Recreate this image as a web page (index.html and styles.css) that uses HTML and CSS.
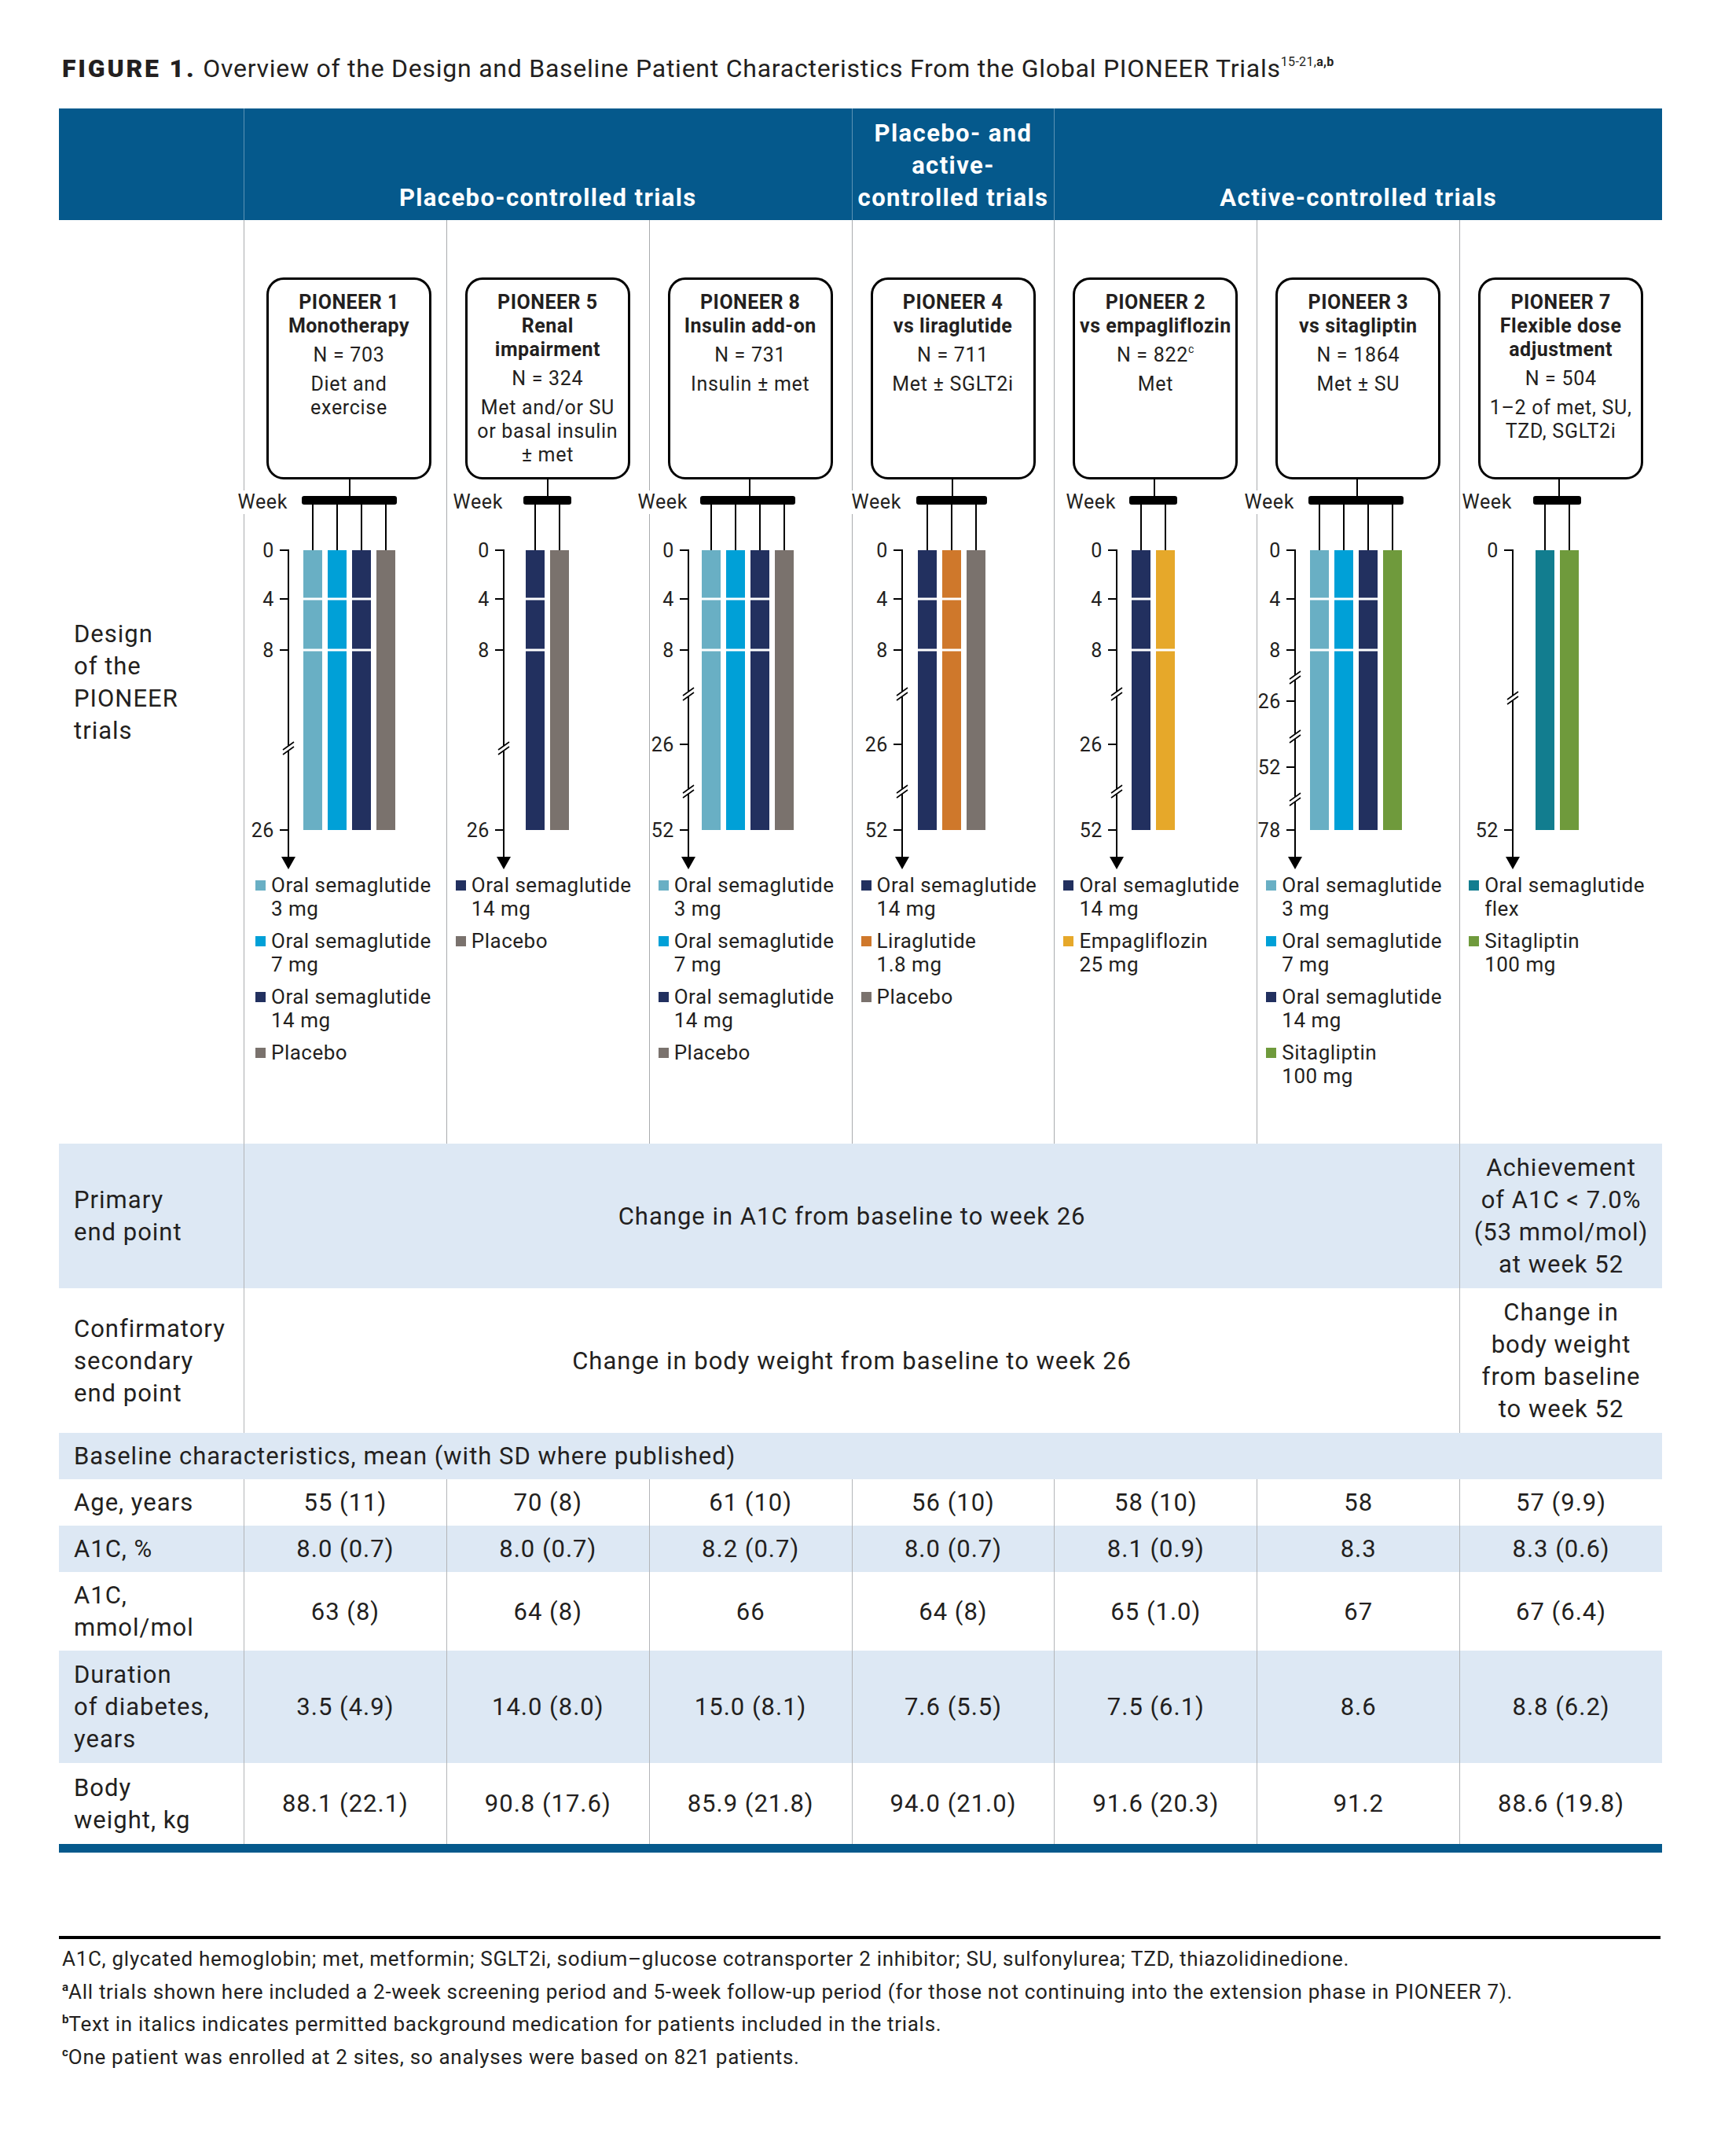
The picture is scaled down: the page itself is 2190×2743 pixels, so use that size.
FILE: index.html
```html
<!DOCTYPE html>
<html lang="en">
<head>
<meta charset="utf-8">
<title>Figure 1 – PIONEER trials</title>
<link rel="stylesheet" href="styles.css">
</head>
<body>
<div class="page">
  <h1 class="title"><b>FIGURE 1.</b> Overview of the Design and Baseline Patient Characteristics From the Global PIONEER Trials<sup>15-21,<b>a,b</b></sup></h1>

  <div class="grid header">
    <div class="hc"></div>
    <div class="hc g3">Placebo-controlled trials</div>
    <div class="hc g1">Placebo- and<br>active-<br>controlled trials</div>
    <div class="hc g3">Active-controlled trials</div>
  </div>

  <div class="grid design">
    <div class="design-label">Design<br>of the<br>PIONEER<br>trials</div>

    <!-- PIONEER 1 -->
    <div class="trial p1">
      <div class="box">
        <div class="name">PIONEER 1<br>Monotherapy</div>
        <div class="n">N = 703</div>
        <div class="bg">Diet and<br>exercise</div>
      </div>
      <svg class="chart" width="258" height="501">
        <rect class="wk" x="-10" y="14" width="65" height="30"/>
        <text x="55" y="37" text-anchor="end">Week</text>
        <line x1="134" y1="0" x2="134" y2="22"/>
        <rect x="73" y="21" width="121" height="11" rx="3"/>
        <line x1="87" y1="32" x2="87" y2="90"/><line x1="118" y1="32" x2="118" y2="90"/><line x1="149" y1="32" x2="149" y2="90"/><line x1="180" y1="32" x2="180" y2="90"/>
        <rect x="75" y="90" width="24" height="356" fill="#69afc4"/>
        <rect x="106" y="90" width="24" height="356" fill="#00a0d7"/>
        <rect x="137" y="90" width="24" height="356" fill="#22305f"/>
        <rect x="168" y="90" width="24" height="356" fill="#7a726d"/>
        <rect class="sep" x="75" y="150.5" width="86" height="3"/>
        <rect class="sep" x="75" y="215.5" width="86" height="3"/>
        <line x1="56" y1="89" x2="56" y2="482"/>
        <line x1="45" y1="90" x2="56" y2="90"/><line x1="45" y1="152" x2="56" y2="152"/><line x1="45" y1="217" x2="56" y2="217"/><line x1="45" y1="446" x2="56" y2="446"/>
        <text x="38" y="99" text-anchor="end">0</text><text x="38" y="161" text-anchor="end">4</text><text x="38" y="226" text-anchor="end">8</text><text x="38" y="455" text-anchor="end">26</text>
        <rect class="wk" x="53" y="339" width="6" height="6"/><line class="brk" x1="49" y1="344" x2="63" y2="334"/><line class="brk" x1="49" y1="350" x2="63" y2="340"/>
        <polygon points="47,480 65,480 56,496"/>
      </svg>
      <ul class="legend">
        <li><span class="sw c-light"></span><span>Oral semaglutide<br>3 mg</span></li>
        <li><span class="sw c-blue"></span><span>Oral semaglutide<br>7 mg</span></li>
        <li><span class="sw c-navy"></span><span>Oral semaglutide<br>14 mg</span></li>
        <li><span class="sw c-gray"></span><span>Placebo</span></li>
      </ul>
    </div>

    <!-- PIONEER 5 -->
    <div class="trial">
      <div class="box">
        <div class="name">PIONEER 5<br>Renal<br>impairment</div>
        <div class="n">N = 324</div>
        <div class="bg">Met and/or SU<br>or basal insulin<br>± met</div>
      </div>
      <svg class="chart" width="258" height="501">
        <rect class="wk" x="6" y="14" width="65" height="30"/>
        <text x="71" y="37" text-anchor="end">Week</text>
        <line x1="128" y1="0" x2="128" y2="22"/>
        <rect x="97" y="21" width="61" height="11" rx="3"/>
        <line x1="112" y1="32" x2="112" y2="90"/><line x1="143" y1="32" x2="143" y2="90"/>
        <rect x="100" y="90" width="24" height="356" fill="#22305f"/>
        <rect x="131" y="90" width="24" height="356" fill="#7a726d"/>
        <rect class="sep" x="100" y="150.5" width="24" height="3"/>
        <rect class="sep" x="100" y="215.5" width="24" height="3"/>
        <line x1="72" y1="89" x2="72" y2="482"/>
        <line x1="61" y1="90" x2="72" y2="90"/><line x1="61" y1="152" x2="72" y2="152"/><line x1="61" y1="217" x2="72" y2="217"/><line x1="61" y1="446" x2="72" y2="446"/>
        <text x="54" y="99" text-anchor="end">0</text><text x="54" y="161" text-anchor="end">4</text><text x="54" y="226" text-anchor="end">8</text><text x="54" y="455" text-anchor="end">26</text>
        <rect class="wk" x="69" y="339" width="6" height="6"/><line class="brk" x1="65" y1="344" x2="79" y2="334"/><line class="brk" x1="65" y1="350" x2="79" y2="340"/>
        <polygon points="63,480 81,480 72,496"/>
      </svg>
      <ul class="legend">
        <li><span class="sw c-navy"></span><span>Oral semaglutide<br>14 mg</span></li>
        <li><span class="sw c-gray"></span><span>Placebo</span></li>
      </ul>
    </div>

    <!-- PIONEER 8 -->
    <div class="trial">
      <div class="box">
        <div class="name">PIONEER 8<br>Insulin add-on</div>
        <div class="n">N = 731</div>
        <div class="bg">Insulin ± met</div>
      </div>
      <svg class="chart" width="258" height="501">
        <rect class="wk" x="-17" y="14" width="65" height="30"/>
        <text x="48" y="37" text-anchor="end">Week</text>
        <line x1="127" y1="0" x2="127" y2="22"/>
        <rect x="64" y="21" width="121" height="11" rx="3"/>
        <line x1="78" y1="32" x2="78" y2="90"/><line x1="109" y1="32" x2="109" y2="90"/><line x1="140" y1="32" x2="140" y2="90"/><line x1="171" y1="32" x2="171" y2="90"/>
        <rect x="66" y="90" width="24" height="356" fill="#69afc4"/>
        <rect x="97" y="90" width="24" height="356" fill="#00a0d7"/>
        <rect x="128" y="90" width="24" height="356" fill="#22305f"/>
        <rect x="159" y="90" width="24" height="356" fill="#7a726d"/>
        <rect class="sep" x="66" y="150.5" width="86" height="3"/>
        <rect class="sep" x="66" y="215.5" width="86" height="3"/>
        <line x1="49" y1="89" x2="49" y2="482"/>
        <line x1="38" y1="90" x2="49" y2="90"/><line x1="38" y1="152" x2="49" y2="152"/><line x1="38" y1="217" x2="49" y2="217"/><line x1="38" y1="337" x2="49" y2="337"/><line x1="38" y1="446" x2="49" y2="446"/>
        <text x="31" y="99" text-anchor="end">0</text><text x="31" y="161" text-anchor="end">4</text><text x="31" y="226" text-anchor="end">8</text><text x="31" y="346" text-anchor="end">26</text><text x="31" y="455" text-anchor="end">52</text>
        <rect class="wk" x="46" y="270" width="6" height="6"/><line class="brk" x1="42" y1="275" x2="56" y2="265"/><line class="brk" x1="42" y1="281" x2="56" y2="271"/>
        <rect class="wk" x="46" y="394" width="6" height="6"/><line class="brk" x1="42" y1="399" x2="56" y2="389"/><line class="brk" x1="42" y1="405" x2="56" y2="395"/>
        <polygon points="40,480 58,480 49,496"/>
      </svg>
      <ul class="legend">
        <li><span class="sw c-light"></span><span>Oral semaglutide<br>3 mg</span></li>
        <li><span class="sw c-blue"></span><span>Oral semaglutide<br>7 mg</span></li>
        <li><span class="sw c-navy"></span><span>Oral semaglutide<br>14 mg</span></li>
        <li><span class="sw c-gray"></span><span>Placebo</span></li>
      </ul>
    </div>

    <!-- PIONEER 4 -->
    <div class="trial">
      <div class="box">
        <div class="name">PIONEER 4<br>vs liraglutide</div>
        <div class="n">N = 711</div>
        <div class="bg">Met ± SGLT2i</div>
      </div>
      <svg class="chart" width="258" height="501">
        <rect class="wk" x="-3" y="14" width="65" height="30"/>
        <text x="62" y="37" text-anchor="end">Week</text>
        <line x1="127" y1="0" x2="127" y2="22"/>
        <rect x="81" y="21" width="90" height="11" rx="3"/>
        <line x1="95" y1="32" x2="95" y2="90"/><line x1="126" y1="32" x2="126" y2="90"/><line x1="157" y1="32" x2="157" y2="90"/>
        <rect x="83" y="90" width="24" height="356" fill="#22305f"/>
        <rect x="114" y="90" width="24" height="356" fill="#cf782b"/>
        <rect x="145" y="90" width="24" height="356" fill="#7a726d"/>
        <rect class="sep" x="83" y="150.5" width="55" height="3"/>
        <rect class="sep" x="83" y="215.5" width="55" height="3"/>
        <line x1="63" y1="89" x2="63" y2="482"/>
        <line x1="52" y1="90" x2="63" y2="90"/><line x1="52" y1="152" x2="63" y2="152"/><line x1="52" y1="217" x2="63" y2="217"/><line x1="52" y1="337" x2="63" y2="337"/><line x1="52" y1="446" x2="63" y2="446"/>
        <text x="45" y="99" text-anchor="end">0</text><text x="45" y="161" text-anchor="end">4</text><text x="45" y="226" text-anchor="end">8</text><text x="45" y="346" text-anchor="end">26</text><text x="45" y="455" text-anchor="end">52</text>
        <rect class="wk" x="60" y="270" width="6" height="6"/><line class="brk" x1="56" y1="275" x2="70" y2="265"/><line class="brk" x1="56" y1="281" x2="70" y2="271"/>
        <rect class="wk" x="60" y="394" width="6" height="6"/><line class="brk" x1="56" y1="399" x2="70" y2="389"/><line class="brk" x1="56" y1="405" x2="70" y2="395"/>
        <polygon points="54,480 72,480 63,496"/>
      </svg>
      <ul class="legend">
        <li><span class="sw c-navy"></span><span>Oral semaglutide<br>14 mg</span></li>
        <li><span class="sw c-orange"></span><span>Liraglutide<br>1.8 mg</span></li>
        <li><span class="sw c-gray"></span><span>Placebo</span></li>
      </ul>
    </div>

    <!-- PIONEER 2 -->
    <div class="trial">
      <div class="box">
        <div class="name">PIONEER 2<br>vs empagliflozin</div>
        <div class="n">N = 822<sup>c</sup></div>
        <div class="bg">Met</div>
      </div>
      <svg class="chart" width="258" height="501">
        <rect class="wk" x="13" y="14" width="65" height="30"/>
        <text x="78" y="37" text-anchor="end">Week</text>
        <line x1="127" y1="0" x2="127" y2="22"/>
        <rect x="95" y="21" width="61" height="11" rx="3"/>
        <line x1="110" y1="32" x2="110" y2="90"/><line x1="141" y1="32" x2="141" y2="90"/>
        <rect x="98" y="90" width="24" height="356" fill="#22305f"/>
        <rect x="129" y="90" width="24" height="356" fill="#e6a82a"/>
        <rect class="sep" x="98" y="150.5" width="24" height="3"/>
        <rect class="sep" x="98" y="215.5" width="55" height="3"/>
        <line x1="79" y1="89" x2="79" y2="482"/>
        <line x1="68" y1="90" x2="79" y2="90"/><line x1="68" y1="152" x2="79" y2="152"/><line x1="68" y1="217" x2="79" y2="217"/><line x1="68" y1="337" x2="79" y2="337"/><line x1="68" y1="446" x2="79" y2="446"/>
        <text x="61" y="99" text-anchor="end">0</text><text x="61" y="161" text-anchor="end">4</text><text x="61" y="226" text-anchor="end">8</text><text x="61" y="346" text-anchor="end">26</text><text x="61" y="455" text-anchor="end">52</text>
        <rect class="wk" x="76" y="270" width="6" height="6"/><line class="brk" x1="72" y1="275" x2="86" y2="265"/><line class="brk" x1="72" y1="281" x2="86" y2="271"/>
        <rect class="wk" x="76" y="394" width="6" height="6"/><line class="brk" x1="72" y1="399" x2="86" y2="389"/><line class="brk" x1="72" y1="405" x2="86" y2="395"/>
        <polygon points="70,480 88,480 79,496"/>
      </svg>
      <ul class="legend">
        <li><span class="sw c-navy"></span><span>Oral semaglutide<br>14 mg</span></li>
        <li><span class="sw c-yellow"></span><span>Empagliflozin<br>25 mg</span></li>
      </ul>
    </div>

    <!-- PIONEER 3 -->
    <div class="trial">
      <div class="box">
        <div class="name">PIONEER 3<br>vs sitagliptin</div>
        <div class="n">N = 1864</div>
        <div class="bg">Met ± SU</div>
      </div>
      <svg class="chart" width="258" height="501">
        <rect class="wk" x="-18" y="14" width="65" height="30"/>
        <text x="47" y="37" text-anchor="end">Week</text>
        <line x1="127" y1="0" x2="127" y2="22"/>
        <rect x="65" y="21" width="121" height="11" rx="3"/>
        <line x1="79" y1="32" x2="79" y2="90"/><line x1="110" y1="32" x2="110" y2="90"/><line x1="141" y1="32" x2="141" y2="90"/><line x1="172" y1="32" x2="172" y2="90"/>
        <rect x="67" y="90" width="24" height="356" fill="#69afc4"/>
        <rect x="98" y="90" width="24" height="356" fill="#00a0d7"/>
        <rect x="129" y="90" width="24" height="356" fill="#22305f"/>
        <rect x="160" y="90" width="24" height="356" fill="#6f9a3c"/>
        <rect class="sep" x="67" y="150.5" width="86" height="3"/>
        <rect class="sep" x="67" y="215.5" width="86" height="3"/>
        <line x1="48" y1="89" x2="48" y2="482"/>
        <line x1="37" y1="90" x2="48" y2="90"/><line x1="37" y1="152" x2="48" y2="152"/><line x1="37" y1="217" x2="48" y2="217"/><line x1="37" y1="282" x2="48" y2="282"/><line x1="37" y1="366" x2="48" y2="366"/><line x1="37" y1="446" x2="48" y2="446"/>
        <text x="30" y="99" text-anchor="end">0</text><text x="30" y="161" text-anchor="end">4</text><text x="30" y="226" text-anchor="end">8</text><text x="30" y="291" text-anchor="end">26</text><text x="30" y="375" text-anchor="end">52</text><text x="30" y="455" text-anchor="end">78</text>
        <rect class="wk" x="45" y="249" width="6" height="6"/><line class="brk" x1="41" y1="254" x2="55" y2="244"/><line class="brk" x1="41" y1="260" x2="55" y2="250"/>
        <rect class="wk" x="45" y="324" width="6" height="6"/><line class="brk" x1="41" y1="329" x2="55" y2="319"/><line class="brk" x1="41" y1="335" x2="55" y2="325"/>
        <rect class="wk" x="45" y="404" width="6" height="6"/><line class="brk" x1="41" y1="409" x2="55" y2="399"/><line class="brk" x1="41" y1="415" x2="55" y2="405"/>
        <polygon points="39,480 57,480 48,496"/>
      </svg>
      <ul class="legend">
        <li><span class="sw c-light"></span><span>Oral semaglutide<br>3 mg</span></li>
        <li><span class="sw c-blue"></span><span>Oral semaglutide<br>7 mg</span></li>
        <li><span class="sw c-navy"></span><span>Oral semaglutide<br>14 mg</span></li>
        <li><span class="sw c-green"></span><span>Sitagliptin<br>100 mg</span></li>
      </ul>
    </div>

    <!-- PIONEER 7 -->
    <div class="trial">
      <div class="box">
        <div class="name">PIONEER 7<br>Flexible dose<br>adjustment</div>
        <div class="n">N = 504</div>
        <div class="bg">1–2 of met, SU,<br>TZD, SGLT2i</div>
      </div>
      <svg class="chart" width="258" height="501">
        <rect class="wk" x="1" y="14" width="65" height="30"/>
        <text x="66" y="37" text-anchor="end">Week</text>
        <line x1="126" y1="0" x2="126" y2="22"/>
        <rect x="93" y="21" width="61" height="11" rx="3"/>
        <line x1="108" y1="32" x2="108" y2="90"/><line x1="139" y1="32" x2="139" y2="90"/>
        <rect x="96" y="90" width="24" height="356" fill="#127d8f"/>
        <rect x="127" y="90" width="24" height="356" fill="#6f9a3c"/>
        <line x1="67" y1="89" x2="67" y2="482"/>
        <line x1="56" y1="90" x2="67" y2="90"/><line x1="56" y1="446" x2="67" y2="446"/>
        <text x="49" y="99" text-anchor="end">0</text><text x="49" y="455" text-anchor="end">52</text>
        <rect class="wk" x="64" y="275" width="6" height="6"/><line class="brk" x1="60" y1="280" x2="74" y2="270"/><line class="brk" x1="60" y1="286" x2="74" y2="276"/>
        <polygon points="58,480 76,480 67,496"/>
      </svg>
      <ul class="legend">
        <li><span class="sw c-teal"></span><span>Oral semaglutide<br>flex</span></li>
        <li><span class="sw c-green"></span><span>Sitagliptin<br>100 mg</span></li>
      </ul>
    </div>
  </div>

  <div class="grid tr blue endp">
    <div class="lab">Primary<br>end point</div>
    <div class="span6">Change in A1C from baseline to week 26</div>
    <div>Achievement<br>of A1C &lt; 7.0%<br>(53 mmol/mol)<br>at week 52</div>
  </div>
  <div class="grid tr endp">
    <div class="lab">Confirmatory<br>secondary<br>end point</div>
    <div class="span6">Change in body weight from baseline to week 26</div>
    <div>Change in<br>body weight<br>from baseline<br>to week 52</div>
  </div>
  <div class="tr blue bhead">
    <div class="lab">Baseline characteristics, mean (with SD where published)</div>
  </div>
  <div class="grid tr">
    <div class="lab">Age, years</div>
    <div>55 (11)</div><div>70 (8)</div><div>61 (10)</div><div>56 (10)</div><div>58 (10)</div><div>58</div><div>57 (9.9)</div>
  </div>
  <div class="grid tr blue">
    <div class="lab">A1C, %</div>
    <div>8.0 (0.7)</div><div>8.0 (0.7)</div><div>8.2 (0.7)</div><div>8.0 (0.7)</div><div>8.1 (0.9)</div><div>8.3</div><div>8.3 (0.6)</div>
  </div>
  <div class="grid tr">
    <div class="lab">A1C,<br>mmol/mol</div>
    <div>63 (8)</div><div>64 (8)</div><div>66</div><div>64 (8)</div><div>65 (1.0)</div><div>67</div><div>67 (6.4)</div>
  </div>
  <div class="grid tr blue h143">
    <div class="lab">Duration<br>of diabetes,<br>years</div>
    <div>3.5 (4.9)</div><div>14.0 (8.0)</div><div>15.0 (8.1)</div><div>7.6 (5.5)</div><div>7.5 (6.1)</div><div>8.6</div><div>8.8 (6.2)</div>
  </div>
  <div class="grid tr h103">
    <div class="lab">Body<br>weight, kg</div>
    <div>88.1 (22.1)</div><div>90.8 (17.6)</div><div>85.9 (21.8)</div><div>94.0 (21.0)</div><div>91.6 (20.3)</div><div>91.2</div><div>88.6 (19.8)</div>
  </div>
  <div class="endbar"></div>

  <div class="rule"></div>
  <div class="notes">
    <p>A1C, glycated hemoglobin; met, metformin; SGLT2i, sodium–glucose cotransporter 2 inhibitor; SU, sulfonylurea; TZD, thiazolidinedione.</p>
    <p><sup>a</sup>All trials shown here included a 2-week screening period and 5-week follow-up period (for those not continuing into the extension phase in PIONEER 7).</p>
    <p><sup>b</sup>Text in italics indicates permitted background medication for patients included in the trials.</p>
    <p><sup>c</sup>One patient was enrolled at 2 sites, so analyses were based on 821 patients.</p>
  </div>
</div>
</body>
</html>
```

FILE: styles.css
```css
* { box-sizing: border-box; }

body {
  margin: 0;
  background: #ffffff;
  color: #231f20;
  font-family: Roboto, "Noto Sans", "DejaVu Sans", sans-serif;
}

.page {
  width: 2190px;
  padding: 67px 75px 60px 75px;
}

.title {
  margin: 0 0 31px 0;
  padding-left: 4px;
  font-size: 32px;
  line-height: 40px;
  font-weight: 400;
  letter-spacing: 0.75px;
  white-space: nowrap;
}
.title > b {
  font-weight: 900;
  letter-spacing: 2.8px;
}
.title sup {
  font-size: 16px;
  line-height: 0;
  letter-spacing: 0.3px;
  vertical-align: 14px;
}
.title sup b { font-weight: 700; letter-spacing: 0.3px; }

.grid {
  display: grid;
  grid-template-columns: 235px repeat(7, minmax(0, 1fr));
}

/* ---------- header ---------- */
.header {
  background: #05598c;
  height: 142px;
  color: #ffffff;
  font-weight: 700;
  font-size: 31px;
  line-height: 41px;
  letter-spacing: 1.4px;
}
.hc {
  display: flex;
  align-items: flex-end;
  justify-content: center;
  text-align: center;
  padding-bottom: 8px;
  white-space: nowrap;
}
.hc.g3 {
  grid-column: span 3;
  border-left: 1px solid rgba(255, 255, 255, 0.35);
}
.hc.g1 {
  border-left: 1px solid rgba(255, 255, 255, 0.35);
}

/* ---------- design area ---------- */
.design {
  height: 1175px;
}
.design-label {
  display: flex;
  align-items: center;
  padding-left: 19px;
  font-size: 31px;
  line-height: 41px;
  letter-spacing: 1px;
}
.trial {
  border-left: 1px solid #a9abae;
  padding-top: 73px;
  min-width: 0;
}

.box {
  width: 210px;
  height: 257px;
  margin-left: 23px;
  border: 3px solid #000000;
  border-radius: 22px;
  padding-top: 14px;
  text-align: center;
  font-size: 25px;
  line-height: 30px;
  white-space: nowrap;
  letter-spacing: 0.7px;
}
.p1 .box { margin-left: 28px; }
.box .name { font-weight: 700; letter-spacing: 0.5px; }
.box .n { margin-top: 7px; }
.box .bg { margin-top: 7px; }
.box sup { font-size: 14px; line-height: 0; vertical-align: 11px; }

.chart {
  display: block;
  overflow: visible;
}
.chart text {
  font-family: Roboto, "Noto Sans", sans-serif;
  font-size: 25px;
  letter-spacing: 0.6px;
  fill: #231f20;
}
.chart line {
  stroke: #000000;
  stroke-width: 2;
}
.chart line.brk { stroke-width: 1.6; }
.chart .wk { fill: #ffffff; }
.chart .sep { fill: #ffffff; }

.legend {
  list-style: none;
  margin: 0;
  padding: 0 0 0 11px;
  font-size: 26px;
  line-height: 30px;
  letter-spacing: 0.5px;
  white-space: nowrap;
}
.p1 .legend { padding-left: 14px; }
.legend li {
  display: flex;
  gap: 7px;
  margin-bottom: 11px;
}
.legend .sw {
  flex: none;
  width: 13px;
  height: 13px;
  margin-top: 9px;
}
.c-light { background: #69afc4; }
.c-blue { background: #00a0d7; }
.c-navy { background: #22305f; }
.c-gray { background: #7a726d; }
.c-orange { background: #cf782b; }
.c-yellow { background: #e6a82a; }
.c-green { background: #6f9a3c; }
.c-teal { background: #127d8f; }

/* ---------- table ---------- */
.tr {
  font-size: 31px;
  line-height: 41px;
  letter-spacing: 1px;
}
.tr.blue { background: #dde8f4; }
.tr > div {
  display: flex;
  align-items: center;
  justify-content: center;
  text-align: center;
  padding: 9px 0;
  border-left: 1px solid #b3b5b8;
  white-space: nowrap;
}
.tr > .lab {
  justify-content: flex-start;
  text-align: left;
  padding-left: 19px;
  border-left: none;
}
.span6 { grid-column: span 6; }
.endp { height: 184px; }
.bhead { height: 59px; }
.bhead > .lab { height: 59px; }
.h143 { height: 143px; }
.h103 { height: 103px; }

.endbar {
  height: 11px;
  background: #05598c;
}

/* ---------- footnotes ---------- */
.rule {
  height: 4px;
  background: #000000;
  margin-top: 106px;
  width: 2038px;
}
.notes {
  padding-top: 5px;
  padding-left: 4px;
}
.notes p {
  margin: 0;
  font-size: 26px;
  line-height: 41.5px;
  letter-spacing: 0.7px;
  white-space: nowrap;
}
.notes sup {
  font-size: 15px;
  font-weight: 700;
  line-height: 0;
  letter-spacing: 0;
  vertical-align: 10px;
}
```
